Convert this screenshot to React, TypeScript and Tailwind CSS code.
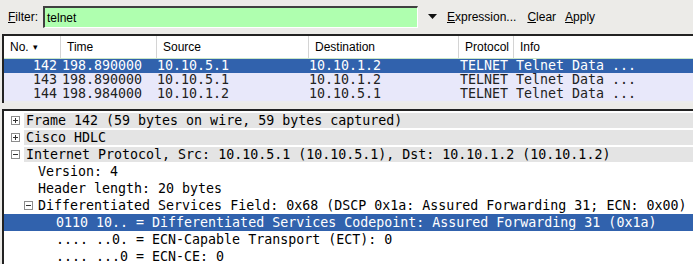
import React from 'react';

const mono = { fontFamily: '"DejaVu Sans Mono", monospace' };

const columns = [
    { label: 'No.', width: 'w-[57px]', sort: true },
    { label: 'Time', width: 'w-[96px]' },
    { label: 'Source', width: 'w-[152px]' },
    { label: 'Destination', width: 'w-[150px]' },
    { label: 'Protocol', width: 'w-[55px]' },
    { label: 'Info', width: 'flex-1' },
];

const packets = [
    { no: '142', time: '198.890000', src: '10.10.5.1', dst: '10.10.1.2', selected: true },
    { no: '143', time: '198.890000', src: '10.10.5.1', dst: '10.10.1.2' },
    { no: '144', time: '198.984000', src: '10.10.1.2', dst: '10.10.5.1' },
];

function Expander({ open }: { open?: boolean }) {
    return (
        <div className="w-[9px] h-[9px] border border-[#8c8c8c] bg-white flex items-center justify-center relative shrink-0">
            <div className="w-[5px] h-px bg-[#333]" />
            {!open && <div className="absolute w-px h-[5px] bg-[#333]" />}
        </div>
    );
}

function TopRow({ text, open }: { text: string; open?: boolean }) {
    return (
        <div className="h-[17px] flex items-center">
            <div className="w-[20px] flex justify-center pl-[3px]">
                <Expander open={open} />
            </div>
            <div className="flex-1 h-[15px] bg-[#e4e4e4] flex items-center pl-[2px] text-black whitespace-pre">
                {text}
            </div>
        </div>
    );
}

function SubRow({ text, indent, expander, selected }: { text: string; indent: string; expander?: boolean; selected?: boolean }) {
    return (
        <div className={`h-[17px] flex items-center whitespace-pre ${selected ? 'bg-[#3162ad] text-white' : 'text-black'}`}>
            <div className={`${indent} flex justify-end pr-[5px]`}>{expander && <Expander open />}</div>
            <span>{text}</span>
        </div>
    );
}

export default function App() {
    return (
        <div className="w-[693px] h-[264px] bg-[#ecebe8] overflow-hidden flex flex-col" style={{ fontFamily: '"Liberation Sans", Arial, sans-serif' }}>
            {/* Filter toolbar */}
            <div className="h-[34px] flex items-center text-[12px] text-black shrink-0">
                <span className="ml-[8px] w-[35px]"><u>F</u>ilter:</span>
                <div className="w-[375px] h-[22px] bg-[#afffaf] border-t-2 border-l-2 border-[#404040] border-r border-b border-r-[#ffffff] border-b-[#ffffff] flex items-center pl-[2px]">
                    telnet
                </div>
                <svg className="ml-[10px]" width="9" height="6" viewBox="0 0 9 6">
                    <path d="M0 0 L9 0 L4.5 5 Z" fill="#111" />
                </svg>
                <span className="ml-[10px]"><u>E</u>xpression...</span>
                <span className="ml-[11px]"><u>C</u>lear</span>
                <span className="ml-[9px]"><u>A</u>pply</span>
            </div>

            {/* Packet list */}
            <div className="ml-[2px] border-t-2 border-l-2 border-[#222] bg-white shrink-0 h-[69px] flex flex-col">
                <div className="h-[23px] flex text-[12px] text-black border-b border-[#c8e6c8]">
                    {columns.map((c, i) => (
                        <div key={i} className={`${c.width} h-full flex items-center pl-[6px] ${i < columns.length - 1 ? 'border-r border-[#d4d4d4]' : ''}`}>
                            {c.label}
                            {c.sort && <span className="ml-[4px] text-[9px] leading-none">▾</span>}
                        </div>
                    ))}
                </div>
                <div className="text-[13.3px] leading-[14px]" style={mono}>
                    {packets.map((p) => (
                        <div key={p.no} className={`h-[14px] flex whitespace-pre ${p.selected ? 'bg-[#3162ad] text-white' : 'bg-[#e8e8fa] text-[#222]'}`}>
                            <div className="w-[57px] text-right pr-[4px]">{p.no}</div>
                            <div className="w-[96px] pl-[1px]">{p.time}</div>
                            <div className="w-[152px]">{p.src}</div>
                            <div className="w-[150px]">{p.dst}</div>
                            <div className="flex-1 pl-[1px]">TELNET Telnet Data ...</div>
                        </div>
                    ))}
                </div>
                <div className="flex-1 bg-[#ececec]" />
            </div>

            <div className="h-[6px] shrink-0" />

            {/* Packet details */}
            <div className="ml-[2px] border-t-2 border-l-2 border-[#222] bg-white flex-1 pt-[1px] text-[13.3px]" style={mono}>
                <TopRow text="Frame 142 (59 bytes on wire, 59 bytes captured)" />
                <TopRow text="Cisco HDLC" />
                <TopRow open text="Internet Protocol, Src: 10.10.5.1 (10.10.5.1), Dst: 10.10.1.2 (10.10.1.2)" />
                <SubRow indent="w-[34px]" text="Version: 4" />
                <SubRow indent="w-[34px]" text="Header length: 20 bytes" />
                <SubRow indent="w-[34px]" expander text="Differentiated Services Field: 0x68 (DSCP 0x1a: Assured Forwarding 31; ECN: 0x00)" />
                <SubRow indent="w-[52px]" selected text="0110 10.. = Differentiated Services Codepoint: Assured Forwarding 31 (0x1a)" />
                <SubRow indent="w-[52px]" text=".... ..0. = ECN-Capable Transport (ECT): 0" />
                <SubRow indent="w-[52px]" text=".... ...0 = ECN-CE: 0" />
            </div>
        </div>
    );
}
